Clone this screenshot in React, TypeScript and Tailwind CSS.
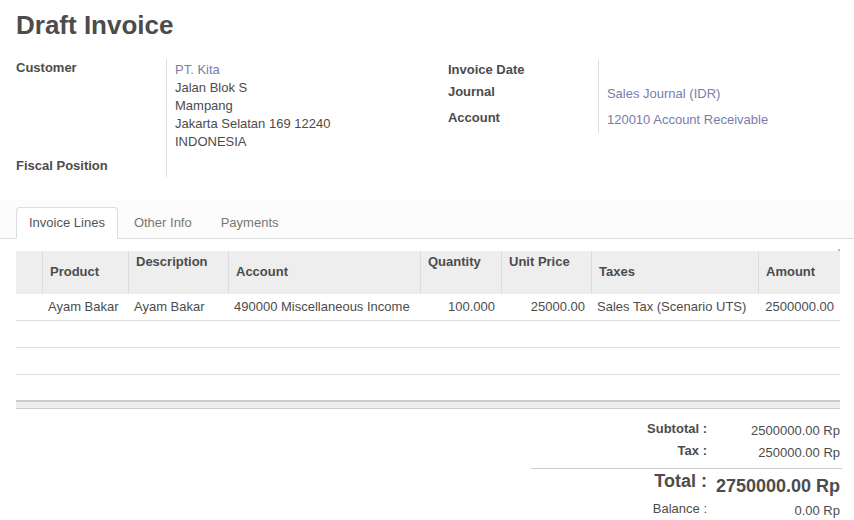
import React from 'react'

const cols = [
  { key: 'handle', label: '', w: 'w-[26px]', top: false, right: false },
  { key: 'product', label: 'Product', w: 'w-[86px]', top: false, right: false },
  { key: 'desc', label: 'Description', w: 'w-[100px]', top: true, right: false },
  { key: 'account', label: 'Account', w: 'w-[192px]', top: false, right: false },
  { key: 'qty', label: 'Quantity', w: 'w-[81px]', top: true, right: true },
  { key: 'price', label: 'Unit Price', w: 'w-[90px]', top: true, right: true },
  { key: 'taxes', label: 'Taxes', w: 'w-[167px]', top: false, right: false },
  { key: 'amount', label: 'Amount', w: 'flex-1', top: false, right: true },
]

const line: Record<string, string> = {
  handle: '',
  product: 'Ayam Bakar',
  desc: 'Ayam Bakar',
  account: '490000 Miscellaneous Income',
  qty: '100.000',
  price: '25000.00',
  taxes: 'Sales Tax (Scenario UTS)',
  amount: '2500000.00',
}

export default function App() {
  return (
    <div className="min-h-[520px] w-[854px] bg-white font-['Liberation_Sans',Arial,sans-serif] text-[13px] leading-[18px] text-[#4c4c4c]">
      {/* Title */}
      <div className="px-4 pt-[7px]">
        <h1 className="text-[26px] font-bold leading-[36px] text-[#4c4c4c]">Draft Invoice</h1>
      </div>

      {/* Header groups */}
      <div className="mt-[16px] flex px-4">
        <div className="w-[433px]">
          <div className="flex">
            <div className="w-[150px] shrink-0 font-bold">Customer</div>
            <div className="border-l border-[#ddd] pl-2 pt-[2px] pb-[6px]">
              <div className="text-[#7c7bad]">PT. Kita</div>
              <div>Jalan Blok S</div>
              <div>Mampang</div>
              <div>Jakarta Selatan 169 12240</div>
              <div>INDONESIA</div>
            </div>
          </div>
          <div className="flex h-[20px]">
            <div className="w-[150px] shrink-0 font-bold">Fiscal Position</div>
            <div className="border-l border-[#ddd] pl-2" />
          </div>
        </div>

        <div className="w-[391px] pt-[1px]">
          <div className="flex h-[23px]">
            <div className="w-[150px] shrink-0 pt-[1px] font-bold">Invoice Date</div>
            <div className="flex-1 border-l border-[#ddd] pl-2" />
          </div>
          <div className="flex h-[26px]">
            <div className="w-[150px] shrink-0 font-bold">Journal</div>
            <div className="flex-1 border-l border-[#ddd] pl-2 pt-[2px] text-[#7c7bad]">Sales Journal (IDR)</div>
          </div>
          <div className="flex h-[24px]">
            <div className="w-[150px] shrink-0 font-bold">Account</div>
            <div className="flex-1 border-l border-[#ddd] pl-2 pt-[2px] text-[#7c7bad]">120010 Account Receivable</div>
          </div>
        </div>
      </div>

      {/* Tabs */}
      <div className="mt-[23px] border-b border-[#ddd] bg-[#fcfcfc] pt-[7px]">
        <div className="flex px-4">
          <div className="-mb-px mr-[2px] rounded-t border border-[#ddd] border-b-white bg-white px-3 pt-[6px] pb-[5px] text-[#555]">Invoice Lines</div>
          <div className="mr-[2px] border border-transparent pl-[13px] pr-3 pt-[6px] pb-[5px] text-[#777]">Other Info</div>
          <div className="mr-[2px] border border-transparent pl-[13px] pr-3 pt-[6px] pb-[5px] text-[#777]">Payments</div>
        </div>
      </div>

      {/* Lines table */}
      <div className="relative mx-4 mt-[12px] w-[824px]">
        <div className="absolute -top-[2px] right-0 h-[2px] w-[2px] bg-[#bbb]" />
        <div className="flex h-[43px] bg-[#eee] font-bold">
          {cols.map((c, i) => (
            <div
              key={c.key}
              className={`${c.w} ${i > 0 ? 'border-l border-[#ddd]' : ''} ${c.top ? 'pt-[2px]' : 'pt-[12px]'} px-[7px]`}
            >
              {c.label}
            </div>
          ))}
        </div>
        <div className="flex h-[27px] items-center border-b border-[#ddd]">
          {cols.map(c => (
            <div key={c.key} className={`${c.w} px-[6px] ${c.right ? 'text-right' : ''} whitespace-nowrap`}>
              {line[c.key]}
            </div>
          ))}
        </div>
        <div className="h-[27px] border-b border-[#ddd]" />
        <div className="h-[27px] border-b border-[#ddd]" />
        <div className="h-[25px]" />
        <div className="h-[9px] border-t-2 border-b border-[#ccc] bg-[#eee]" />
      </div>

      {/* Totals */}
      <div className="ml-[531px] mt-[11px] w-[311px]">
        <div className="flex h-[22px]">
          <div className="w-[176px] text-right font-bold">Subtotal :</div>
          <div className="w-[133px] pt-[2px] text-right">2500000.00 Rp</div>
        </div>
        <div className="flex h-[22px]">
          <div className="w-[176px] text-right font-bold">Tax :</div>
          <div className="w-[133px] pt-[2px] text-right">250000.00 Rp</div>
        </div>
        <div className="mt-[4px] h-px bg-[#ccc]" />
        <div className="flex h-[31px]">
          <div className="w-[176px] pt-px text-right text-[18px] font-bold leading-[22px]">Total :</div>
          <div className="w-[133px] pt-[6px] text-right text-[18px] font-bold leading-[22px]">2750000.00 Rp</div>
        </div>
        <div className="flex h-[21px]">
          <div className="w-[176px] text-right">Balance :</div>
          <div className="w-[133px] pt-[2px] text-right">0.00 Rp</div>
        </div>
      </div>
    </div>
  )
}
